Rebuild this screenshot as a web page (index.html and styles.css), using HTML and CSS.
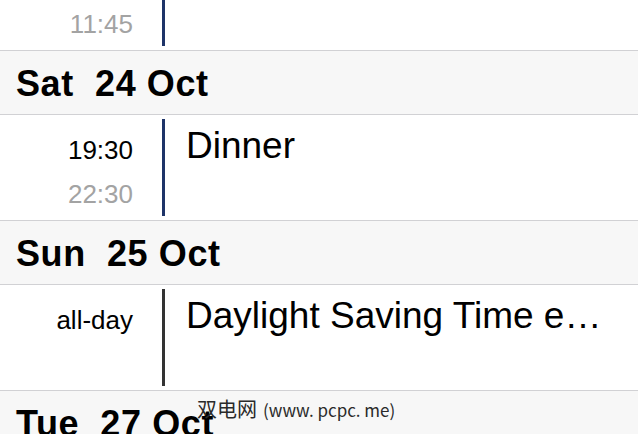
FILE: index.html
```html
<!doctype html>
<html lang="en">
<head>
    <meta charset="UTF-8">
    <title>Calendar list</title>
    <link rel="stylesheet" href="styles.css">
</head>
<body>
<div class="list">
    <!-- row scrolled out of view, only its end time shows -->
    <div class="event">
        <div class="times">
            <div class="blank"></div>
            <div class="end">11:45</div>
        </div>
        <div class="bar"></div>
        <div class="title"></div>
    </div>

    <div class="day-head">Sat  24 Oct</div>
    <div class="event">
        <div class="times">
            <div>19:30</div>
            <div class="end">22:30</div>
        </div>
        <div class="bar"></div>
        <div class="title">Dinner</div>
    </div>

    <div class="day-head">Sun  25 Oct</div>
    <div class="event">
        <div class="times">
            <div>all-day</div>
        </div>
        <div class="bar grey"></div>
        <div class="title">Daylight Saving Time ends</div>
    </div>

    <div class="day-head">Tue  27 Oct</div>
</div>

<!-- watermark over the screenshot -->
<div class="mark"><span class="cjk">双电网</span>(www. pcpc. me)</div>
</body>
</html>
```

FILE: styles.css
```css
body{
    margin:0;
    background-color:#fff;
    font-family:"Liberation Sans", Arial, sans-serif;
    color:#000;
    overflow:hidden;
    height:434px;
    position:relative;
}

/* list is scrolled a bit, first row is cut at the top */
.list{
    margin-top:-55px;
}

.day-head{
    height:60px;
    padding:3px 0 0 16px;
    line-height:60px;
    font-size:36px;
    font-weight:bold;
    letter-spacing:.6px;
    white-space:pre;
    background-color:#f7f7f7;
    border-bottom:1px solid #d1d1d4;
}

.event{
    display:flex;
    padding:4px 0;
    border-bottom:1px solid #d1d1d4;
    background-color:#fff;
}

.times{
    width:133px;
    flex-shrink:0;
    padding-top:9px;
    text-align:right;
    font-size:26px;
    line-height:44px;
}
.times .blank{
    height:44px;
}
.times .end{
    color:#a3a3a3;
}

.bar{
    width:3px;
    height:97px;
    margin-left:29px;
    flex-shrink:0;
    background-color:#1e3468;
}
.bar.grey{
    background-color:#333;
}

.title{
    flex:1;
    min-width:0;
    margin-left:21px;
    padding:5px 18px 0 0;
    font-size:37px;
    line-height:44px;
    white-space:nowrap;
    overflow:hidden;
    text-overflow:ellipsis;
}

.mark{
    position:absolute;
    left:197px;
    top:397px;
    font-family:"Noto Sans CJK SC", sans-serif;
    font-size:17px;
    line-height:24px;
    color:#2a2a2a;
    white-space:nowrap;
}
.mark .cjk{
    font-size:20px;
    margin-right:6px;
}
```
